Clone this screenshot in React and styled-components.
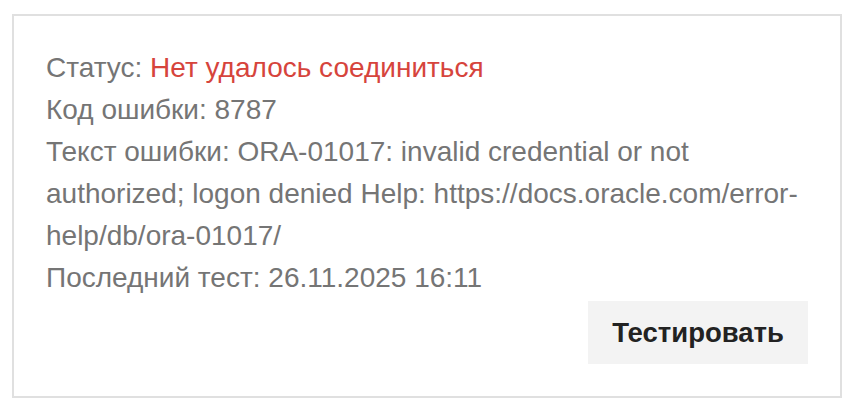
import React from 'react';
import styled, { createGlobalStyle } from 'styled-components';

const GlobalStyle = createGlobalStyle`
  * { box-sizing: border-box; }
  body {
    margin: 0;
    background: #ffffff;
    font-family: "Liberation Sans", Arial, sans-serif;
  }
`;

// ---------- PAGE
const Page = styled.div`
  padding: 14px 16px 14px 12px;
`;

// ---------- CARD
const Card = styled.section`
  width: 830px;
  border: 2px solid #e0e0e0;
  padding: 31px 32px 32px 32px;
  display: flex;
  flex-direction: column;
`;

const Line = styled.p`
  margin: 0;
  font-size: 28px;
  line-height: 42px;
  color: #757575;
`;

const Status = styled.span`
  color: ${(p) => (p.$ok ? '#3c9d4a' : '#d6443c')};
`;

const Actions = styled.div`
  display: flex;
  justify-content: flex-end;
  margin-top: 2px;
`;

const TestButton = styled.button`
  border: none;
  background: #f3f3f3;
  color: #222222;
  font-family: "Liberation Sans", Arial, sans-serif;
  font-weight: 700;
  font-size: 27.5px;
  height: 63px;
  padding: 0 24px;
  cursor: pointer;
`;

export default function App() {
  return (
    <>
      <GlobalStyle />
      <Page>
        <Card>
          <Line>Статус: <Status>Нет удалось соединиться</Status></Line>
          <Line>Код ошибки: 8787</Line>
          <Line>Текст ошибки: ORA-01017: invalid credential or not authorized; logon denied Help: https://docs.oracle.com/error-help/db/ora-01017/</Line>
          <Line>Последний тест: 26.11.2025 16:11</Line>
          <Actions>
            <TestButton>Тестировать</TestButton>
          </Actions>
        </Card>
      </Page>
    </>
  );
}
